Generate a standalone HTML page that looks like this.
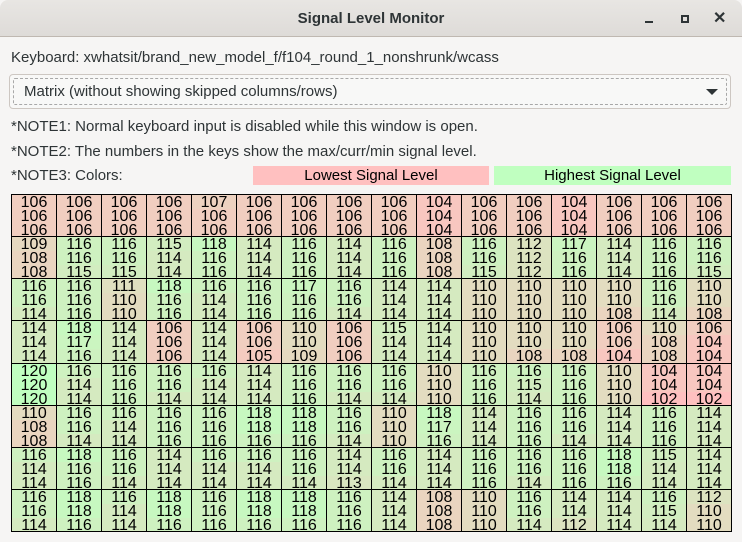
<!DOCTYPE html>
<html><head><meta charset="utf-8"><style>
*{margin:0;padding:0;box-sizing:border-box}
html,body{width:742px;height:542px;overflow:hidden;background:#f6f5f4;font-family:"Liberation Sans",sans-serif;color:#2e3436}
.tb{position:absolute;left:0;top:0;width:742px;height:37px;background:linear-gradient(#e8e6e3,#dedbd8);border-bottom:1px solid #bfb8b1;border-radius:8px 8px 0 0}
.tb .t{position:absolute;left:0;right:0;top:10px;text-align:center;font-weight:bold;font-size:15px;color:#2e3436}
.t1{position:absolute;font-size:15px;left:11px;white-space:nowrap}
.combo{position:absolute;left:9px;top:74px;width:722px;height:35px;border:1px solid #cdc7c2;border-radius:4px;background:#f8f8f7}
.combo .in{position:absolute;left:3px;top:3px;right:3px;bottom:3px;border:1px dashed #a8a8a8;border-radius:2px}
.combo span{position:absolute;left:14px;top:8px;font-size:15px}
.combo .ar{position:absolute;right:12px;top:14px;width:0;height:0;border-left:6px solid transparent;border-right:6px solid transparent;border-top:6px solid #2e3436}
.lg{position:absolute;top:166px;height:19px;font-size:15px;text-align:center;line-height:19px;color:#000}
.grid{position:absolute;left:11px;top:194px;width:721px;height:338px;background:#000;display:grid;grid-template-columns:repeat(16,1fr);grid-template-rows:repeat(8,1fr);gap:1px;padding:1px}
.c{display:flex;flex-direction:column;overflow:hidden}
.c b{flex:1;font-weight:normal;font-size:16px;line-height:13px;text-align:center;color:#000;padding-top:1px}
.a102{background:rgb(255,192,192)}.a104{background:rgb(248,199,192)}.a105{background:rgb(245,203,192)}.a106{background:rgb(241,206,192)}.a107{background:rgb(237,210,192)}.a108{background:rgb(234,213,192)}.a109{background:rgb(230,217,192)}.a110{background:rgb(227,220,192)}.a111{background:rgb(224,224,192)}.a112{background:rgb(220,227,192)}.a113{background:rgb(217,230,192)}.a114{background:rgb(213,234,192)}.a115{background:rgb(210,237,192)}.a116{background:rgb(206,241,192)}.a117{background:rgb(203,245,192)}.a118{background:rgb(199,248,192)}.a120{background:rgb(192,255,192)}
</style></head><body>
<div class="tb"><div class="t">Signal Level Monitor</div>
<div style="position:absolute;left:645px;top:21px;width:8px;height:2px;background:#2e3436"></div>
<div style="position:absolute;left:681px;top:15px;width:8px;height:8px;border:2px solid #2e3436"></div>
<div style="position:absolute;left:713px;top:8px;font-size:16px;font-weight:bold;color:#2e3436">✕</div>
</div>
<div class="t1" style="top:49px">Keyboard: xwhatsit/brand_new_model_f/f104_round_1_nonshrunk/wcass</div>
<div class="combo"><div class="in"></div><span>Matrix (without showing skipped columns/rows)</span><div class="ar"></div></div>
<div class="t1" style="top:118px">*NOTE1: Normal keyboard input is disabled while this window is open.</div>
<div class="t1" style="top:143px">*NOTE2: The numbers in the keys show the max/curr/min signal level.</div>
<div class="t1" style="top:167px">*NOTE3: Colors:</div>
<div class="lg" style="left:253px;width:236px;background:#ffc0c0">Lowest Signal Level</div>
<div class="lg" style="left:494px;width:237px;background:#c0ffc0">Highest Signal Level</div>
<div class="grid">
<div class="c"><b class="a106">106</b><b class="a106">106</b><b class="a106">106</b></div>
<div class="c"><b class="a106">106</b><b class="a106">106</b><b class="a106">106</b></div>
<div class="c"><b class="a106">106</b><b class="a106">106</b><b class="a106">106</b></div>
<div class="c"><b class="a106">106</b><b class="a106">106</b><b class="a106">106</b></div>
<div class="c"><b class="a107">107</b><b class="a106">106</b><b class="a106">106</b></div>
<div class="c"><b class="a106">106</b><b class="a106">106</b><b class="a106">106</b></div>
<div class="c"><b class="a106">106</b><b class="a106">106</b><b class="a106">106</b></div>
<div class="c"><b class="a106">106</b><b class="a106">106</b><b class="a106">106</b></div>
<div class="c"><b class="a106">106</b><b class="a106">106</b><b class="a106">106</b></div>
<div class="c"><b class="a104">104</b><b class="a104">104</b><b class="a104">104</b></div>
<div class="c"><b class="a106">106</b><b class="a106">106</b><b class="a106">106</b></div>
<div class="c"><b class="a106">106</b><b class="a106">106</b><b class="a106">106</b></div>
<div class="c"><b class="a104">104</b><b class="a104">104</b><b class="a104">104</b></div>
<div class="c"><b class="a106">106</b><b class="a106">106</b><b class="a106">106</b></div>
<div class="c"><b class="a106">106</b><b class="a106">106</b><b class="a106">106</b></div>
<div class="c"><b class="a106">106</b><b class="a106">106</b><b class="a106">106</b></div>

<div class="c"><b class="a109">109</b><b class="a108">108</b><b class="a108">108</b></div>
<div class="c"><b class="a116">116</b><b class="a116">116</b><b class="a115">115</b></div>
<div class="c"><b class="a116">116</b><b class="a116">116</b><b class="a115">115</b></div>
<div class="c"><b class="a115">115</b><b class="a114">114</b><b class="a114">114</b></div>
<div class="c"><b class="a118">118</b><b class="a116">116</b><b class="a116">116</b></div>
<div class="c"><b class="a114">114</b><b class="a114">114</b><b class="a114">114</b></div>
<div class="c"><b class="a116">116</b><b class="a116">116</b><b class="a116">116</b></div>
<div class="c"><b class="a114">114</b><b class="a114">114</b><b class="a114">114</b></div>
<div class="c"><b class="a116">116</b><b class="a116">116</b><b class="a116">116</b></div>
<div class="c"><b class="a108">108</b><b class="a108">108</b><b class="a108">108</b></div>
<div class="c"><b class="a116">116</b><b class="a116">116</b><b class="a115">115</b></div>
<div class="c"><b class="a112">112</b><b class="a112">112</b><b class="a112">112</b></div>
<div class="c"><b class="a117">117</b><b class="a116">116</b><b class="a116">116</b></div>
<div class="c"><b class="a114">114</b><b class="a114">114</b><b class="a114">114</b></div>
<div class="c"><b class="a116">116</b><b class="a116">116</b><b class="a116">116</b></div>
<div class="c"><b class="a116">116</b><b class="a116">116</b><b class="a115">115</b></div>

<div class="c"><b class="a116">116</b><b class="a116">116</b><b class="a114">114</b></div>
<div class="c"><b class="a116">116</b><b class="a116">116</b><b class="a116">116</b></div>
<div class="c"><b class="a111">111</b><b class="a110">110</b><b class="a110">110</b></div>
<div class="c"><b class="a118">118</b><b class="a116">116</b><b class="a116">116</b></div>
<div class="c"><b class="a116">116</b><b class="a114">114</b><b class="a114">114</b></div>
<div class="c"><b class="a116">116</b><b class="a116">116</b><b class="a116">116</b></div>
<div class="c"><b class="a117">117</b><b class="a116">116</b><b class="a116">116</b></div>
<div class="c"><b class="a116">116</b><b class="a116">116</b><b class="a114">114</b></div>
<div class="c"><b class="a114">114</b><b class="a114">114</b><b class="a114">114</b></div>
<div class="c"><b class="a114">114</b><b class="a114">114</b><b class="a114">114</b></div>
<div class="c"><b class="a110">110</b><b class="a110">110</b><b class="a110">110</b></div>
<div class="c"><b class="a110">110</b><b class="a110">110</b><b class="a110">110</b></div>
<div class="c"><b class="a110">110</b><b class="a110">110</b><b class="a110">110</b></div>
<div class="c"><b class="a110">110</b><b class="a110">110</b><b class="a108">108</b></div>
<div class="c"><b class="a116">116</b><b class="a116">116</b><b class="a114">114</b></div>
<div class="c"><b class="a110">110</b><b class="a110">110</b><b class="a108">108</b></div>

<div class="c"><b class="a114">114</b><b class="a114">114</b><b class="a114">114</b></div>
<div class="c"><b class="a118">118</b><b class="a117">117</b><b class="a116">116</b></div>
<div class="c"><b class="a114">114</b><b class="a114">114</b><b class="a114">114</b></div>
<div class="c"><b class="a106">106</b><b class="a106">106</b><b class="a106">106</b></div>
<div class="c"><b class="a114">114</b><b class="a114">114</b><b class="a114">114</b></div>
<div class="c"><b class="a106">106</b><b class="a106">106</b><b class="a105">105</b></div>
<div class="c"><b class="a110">110</b><b class="a110">110</b><b class="a109">109</b></div>
<div class="c"><b class="a106">106</b><b class="a106">106</b><b class="a106">106</b></div>
<div class="c"><b class="a115">115</b><b class="a114">114</b><b class="a114">114</b></div>
<div class="c"><b class="a114">114</b><b class="a114">114</b><b class="a114">114</b></div>
<div class="c"><b class="a110">110</b><b class="a110">110</b><b class="a110">110</b></div>
<div class="c"><b class="a110">110</b><b class="a110">110</b><b class="a108">108</b></div>
<div class="c"><b class="a110">110</b><b class="a110">110</b><b class="a108">108</b></div>
<div class="c"><b class="a106">106</b><b class="a106">106</b><b class="a104">104</b></div>
<div class="c"><b class="a110">110</b><b class="a108">108</b><b class="a108">108</b></div>
<div class="c"><b class="a106">106</b><b class="a104">104</b><b class="a104">104</b></div>

<div class="c"><b class="a120">120</b><b class="a120">120</b><b class="a120">120</b></div>
<div class="c"><b class="a116">116</b><b class="a114">114</b><b class="a114">114</b></div>
<div class="c"><b class="a116">116</b><b class="a116">116</b><b class="a116">116</b></div>
<div class="c"><b class="a116">116</b><b class="a116">116</b><b class="a114">114</b></div>
<div class="c"><b class="a116">116</b><b class="a114">114</b><b class="a114">114</b></div>
<div class="c"><b class="a114">114</b><b class="a114">114</b><b class="a114">114</b></div>
<div class="c"><b class="a116">116</b><b class="a116">116</b><b class="a116">116</b></div>
<div class="c"><b class="a116">116</b><b class="a116">116</b><b class="a114">114</b></div>
<div class="c"><b class="a116">116</b><b class="a116">116</b><b class="a114">114</b></div>
<div class="c"><b class="a110">110</b><b class="a110">110</b><b class="a110">110</b></div>
<div class="c"><b class="a116">116</b><b class="a116">116</b><b class="a116">116</b></div>
<div class="c"><b class="a116">116</b><b class="a115">115</b><b class="a114">114</b></div>
<div class="c"><b class="a116">116</b><b class="a116">116</b><b class="a116">116</b></div>
<div class="c"><b class="a110">110</b><b class="a110">110</b><b class="a110">110</b></div>
<div class="c"><b class="a104">104</b><b class="a104">104</b><b class="a102">102</b></div>
<div class="c"><b class="a104">104</b><b class="a104">104</b><b class="a102">102</b></div>

<div class="c"><b class="a110">110</b><b class="a108">108</b><b class="a108">108</b></div>
<div class="c"><b class="a116">116</b><b class="a116">116</b><b class="a114">114</b></div>
<div class="c"><b class="a116">116</b><b class="a114">114</b><b class="a114">114</b></div>
<div class="c"><b class="a116">116</b><b class="a116">116</b><b class="a116">116</b></div>
<div class="c"><b class="a116">116</b><b class="a116">116</b><b class="a116">116</b></div>
<div class="c"><b class="a118">118</b><b class="a118">118</b><b class="a116">116</b></div>
<div class="c"><b class="a118">118</b><b class="a118">118</b><b class="a116">116</b></div>
<div class="c"><b class="a116">116</b><b class="a116">116</b><b class="a114">114</b></div>
<div class="c"><b class="a110">110</b><b class="a110">110</b><b class="a110">110</b></div>
<div class="c"><b class="a118">118</b><b class="a117">117</b><b class="a116">116</b></div>
<div class="c"><b class="a114">114</b><b class="a114">114</b><b class="a114">114</b></div>
<div class="c"><b class="a116">116</b><b class="a116">116</b><b class="a116">116</b></div>
<div class="c"><b class="a116">116</b><b class="a116">116</b><b class="a114">114</b></div>
<div class="c"><b class="a114">114</b><b class="a114">114</b><b class="a114">114</b></div>
<div class="c"><b class="a116">116</b><b class="a116">116</b><b class="a116">116</b></div>
<div class="c"><b class="a114">114</b><b class="a114">114</b><b class="a114">114</b></div>

<div class="c"><b class="a116">116</b><b class="a114">114</b><b class="a114">114</b></div>
<div class="c"><b class="a118">118</b><b class="a116">116</b><b class="a116">116</b></div>
<div class="c"><b class="a116">116</b><b class="a116">116</b><b class="a114">114</b></div>
<div class="c"><b class="a114">114</b><b class="a114">114</b><b class="a114">114</b></div>
<div class="c"><b class="a116">116</b><b class="a114">114</b><b class="a114">114</b></div>
<div class="c"><b class="a116">116</b><b class="a114">114</b><b class="a114">114</b></div>
<div class="c"><b class="a116">116</b><b class="a116">116</b><b class="a114">114</b></div>
<div class="c"><b class="a114">114</b><b class="a114">114</b><b class="a113">113</b></div>
<div class="c"><b class="a116">116</b><b class="a116">116</b><b class="a114">114</b></div>
<div class="c"><b class="a114">114</b><b class="a114">114</b><b class="a114">114</b></div>
<div class="c"><b class="a116">116</b><b class="a116">116</b><b class="a116">116</b></div>
<div class="c"><b class="a116">116</b><b class="a116">116</b><b class="a114">114</b></div>
<div class="c"><b class="a116">116</b><b class="a116">116</b><b class="a116">116</b></div>
<div class="c"><b class="a118">118</b><b class="a118">118</b><b class="a116">116</b></div>
<div class="c"><b class="a115">115</b><b class="a114">114</b><b class="a114">114</b></div>
<div class="c"><b class="a114">114</b><b class="a114">114</b><b class="a114">114</b></div>

<div class="c"><b class="a116">116</b><b class="a116">116</b><b class="a114">114</b></div>
<div class="c"><b class="a118">118</b><b class="a118">118</b><b class="a116">116</b></div>
<div class="c"><b class="a116">116</b><b class="a114">114</b><b class="a114">114</b></div>
<div class="c"><b class="a118">118</b><b class="a118">118</b><b class="a116">116</b></div>
<div class="c"><b class="a116">116</b><b class="a116">116</b><b class="a116">116</b></div>
<div class="c"><b class="a118">118</b><b class="a118">118</b><b class="a116">116</b></div>
<div class="c"><b class="a118">118</b><b class="a118">118</b><b class="a116">116</b></div>
<div class="c"><b class="a116">116</b><b class="a116">116</b><b class="a116">116</b></div>
<div class="c"><b class="a114">114</b><b class="a114">114</b><b class="a114">114</b></div>
<div class="c"><b class="a108">108</b><b class="a108">108</b><b class="a108">108</b></div>
<div class="c"><b class="a110">110</b><b class="a110">110</b><b class="a110">110</b></div>
<div class="c"><b class="a116">116</b><b class="a116">116</b><b class="a114">114</b></div>
<div class="c"><b class="a114">114</b><b class="a114">114</b><b class="a112">112</b></div>
<div class="c"><b class="a114">114</b><b class="a114">114</b><b class="a114">114</b></div>
<div class="c"><b class="a116">116</b><b class="a115">115</b><b class="a114">114</b></div>
<div class="c"><b class="a112">112</b><b class="a110">110</b><b class="a110">110</b></div>
</div>
</body></html>
